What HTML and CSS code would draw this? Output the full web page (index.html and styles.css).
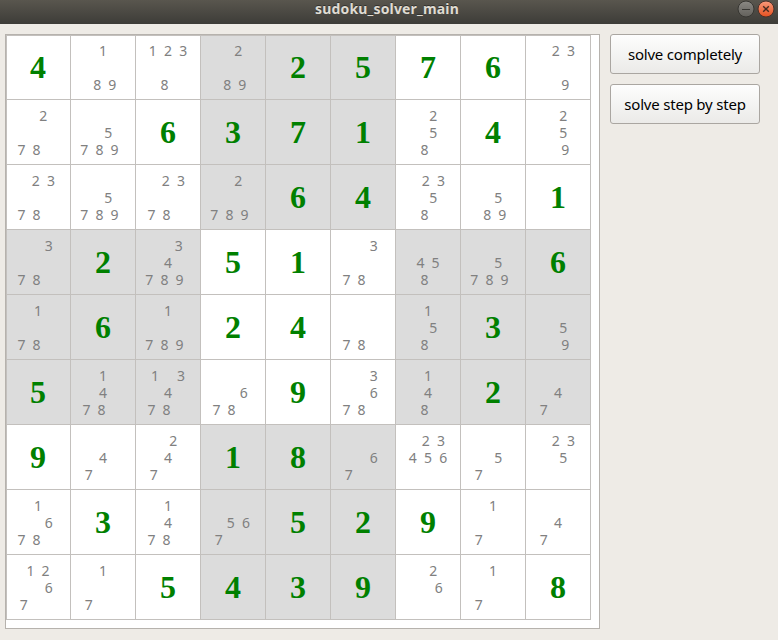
FILE: index.html
```html
<!DOCTYPE html>
<html lang="en">
<head>
<meta charset="utf-8">
<title>sudoku_solver_main</title>
<link rel="stylesheet" href="styles.css">
</head>
<body>
<header class="titlebar">
  <h1 class="title">sudoku_solver_main</h1>
  <svg class="controls" width="40" height="20" viewBox="0 0 40 20">
    <defs>
      <linearGradient id="gray" x1="0" y1="0" x2="0" y2="1"><stop offset="0" stop-color="#8b8984"/><stop offset="1" stop-color="#62605b"/></linearGradient>
      <linearGradient id="orange" x1="0" y1="0" x2="0" y2="1"><stop offset="0" stop-color="#f89b7c"/><stop offset="1" stop-color="#e5501f"/></linearGradient>
    </defs>
    <circle cx="10" cy="9" r="8" fill="url(#gray)" stroke="#373632"/>
    <path d="M6 9.5h8" stroke="#383733"/>
    <circle cx="30" cy="9" r="8" fill="url(#orange)" stroke="#4a3029"/>
    <path d="M27.2 6.2l5.6 5.6M32.8 6.2l-5.6 5.6" stroke="#452a20" stroke-width="1.4"/>
  </svg>
</header>
<main class="content">
  <div class="view"><div class="board" id="board"></div></div>
  <div class="actions">
    <button class="action"><span class="label">solve completely</span></button>
    <button class="action"><span class="label">solve step by step</span></button>
  </div>
</main>
<script src="board.js"></script>
</body>
</html>
```
FILE: styles.css
```css
* { box-sizing: border-box; }
body {
  margin: 0;
  height: 640px;
  overflow: hidden;
  background: #eeebe6;
  font-family: "Noto Sans", sans-serif;
}
.titlebar {
  display: grid;
  grid-template-columns: 1fr auto 1fr;
  height: 24px;
  background: linear-gradient(#59564e, #3d3c38);
}
.title {
  grid-column: 2;
  margin: 0;
  font: bold 14px/18px "Noto Sans", sans-serif;
  letter-spacing: 0.17px;
  color: #dfdbd2;
  text-shadow: 0 -1px #33322e;
  transform: translateX(-2px);
}
.controls { justify-self: end; margin-right: 2px; }
.content {
  display: flex;
  align-items: flex-start;
  gap: 10px;
  padding: 10px 0 0 5px;
}
.view {
  width: 595px;
  height: 595px;
  border: 1px solid #b6b2ad;
  background: #fff;
}
.board {
  display: grid;
  grid-template-columns: 64px repeat(8, 65px);
  grid-template-rows: 64px repeat(8, 65px);
  width: 585px;
  height: 585px;
  border: solid #c3c0bd;
  border-width: 1px 0 0 1px;
}
.cell {
  display: flex;
  align-items: center;
  justify-content: center;
  border: solid #c3c0bd;
  border-width: 0 1px 1px 0;
  background: #fff;
}
.cell:nth-child(9n + 1) { padding-right: 1px; }
.cell:nth-child(-n + 9) { padding-bottom: 1px; }
.shaded { background: #dcdcdc; }
.solved {
  font: bold 32px/36px "Liberation Serif", serif;
  color: #008000;
}
.candidates {
  font-size: 14px;
  line-height: 17px;
  word-spacing: -0.06px;
  white-space: pre;
  text-align: center;
  color: #808080;
}
.actions { display: grid; gap: 10px; }
.action {
  display: flex;
  align-items: center;
  justify-content: center;
  width: 150px;
  height: 40px;
  padding: 0 0 1px;
  border: 1px solid #aaa6a1;
  border-radius: 3px;
  background: linear-gradient(#fdfdfd, #ebeae8);
  font: 15px/20px "Noto Sans", sans-serif;
  color: #000;
  white-space: nowrap;
}
.label { letter-spacing: -0.2px; }
```
FILE: board.js
```js
// A single digit is a solved cell; several digits are the cell's candidates.
const rows = [
  "4 189 1238 289 2 5 7 6 239",
  "278 5789 6 3 7 1 258 4 259",
  "2378 5789 2378 2789 6 4 2358 589 1",
  "378 2 34789 5 1 378 458 5789 6",
  "178 6 1789 2 4 78 158 3 59",
  "5 1478 13478 678 9 3678 148 2 47",
  "9 47 247 1 8 67 23456 57 235",
  "1678 3 1478 567 5 2 9 17 47",
  "1267 17 5 4 3 9 26 17 8"
];

function candidateText(digits) {
  const lines = ["123", "456", "789"].map(group =>
    [...group].map(d => (digits.includes(d) ? d : " ") + "  ").join(""));
  return lines[0].trimEnd() + "\n" + lines[1].trimEnd() + "\n" + lines[2];
}

const board = document.getElementById("board");
rows.forEach((row, r) => row.split(" ").forEach((value, c) => {
  const cell = document.createElement("div");
  const text = document.createElement("div");
  const block = Math.floor(r / 3) + Math.floor(c / 3);
  cell.className = block % 2 ? "cell shaded" : "cell";
  text.className = value.length === 1 ? "solved" : "candidates";
  text.textContent = value.length === 1 ? value : candidateText(value);
  cell.append(text);
  board.append(cell);
}));
```
